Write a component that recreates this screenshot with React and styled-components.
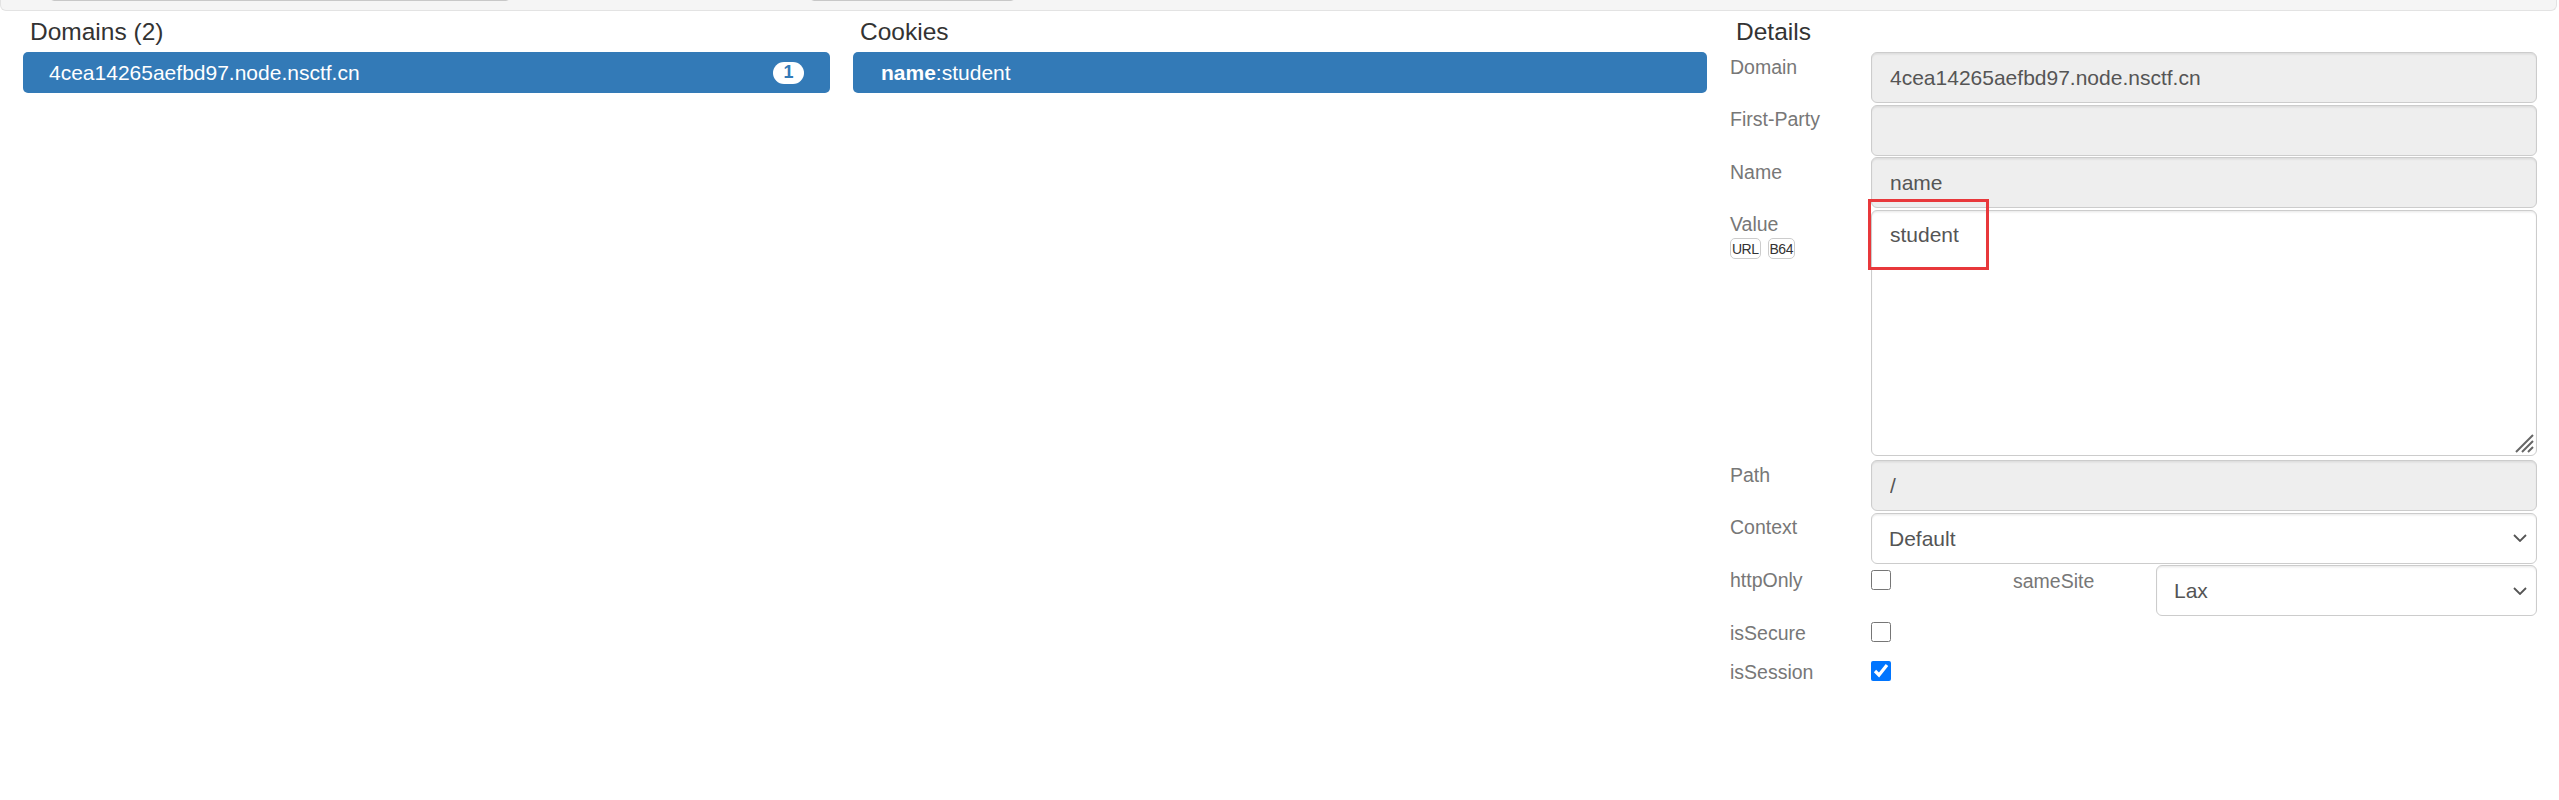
import React from 'react';
import styled, { createGlobalStyle } from 'styled-components';

const GlobalStyle = createGlobalStyle`
  html, body {
    margin: 0;
    padding: 0;
    background: #fff;
    font-family: "Liberation Sans", Arial, sans-serif;
  }
  * { box-sizing: border-box; }
`;

const Toolbar = styled.div`
  display: flex;
  height: 11px;
  margin-right: 2px;
  background: #f5f5f5;
  border: 1px solid #e3e3e3;
  border-top: none;
  border-radius: 0 0 6px 6px;
  overflow: hidden;
`;

const ToolbarField = styled.input`
  flex: none;
  width: ${p => p.$width}px;
  height: 30px;
  margin: -29px 0 0 ${p => p.$offset}px;
  border: 1px solid #c8c8c8;
  border-radius: 4px;
  background: #fff;
`;

const Columns = styled.div`
  display: grid;
  grid-template-columns: 807px 854px 807px;
  column-gap: 23px;
  padding: 0 22px 0 23px;
`;

const Panel = styled.section`
  display: flex;
  flex-direction: column;
`;

const Heading = styled.h4`
  margin: 0;
  height: 41px;
  padding: 7px ${p => p.$inset || 7}px 0;
  font-size: 24.5px;
  line-height: 27px;
  font-weight: 400;
  color: #333;
`;

const ListItem = styled.div`
  display: flex;
  align-items: center;
  justify-content: space-between;
  height: 41px;
  padding: 0 26px 0 ${p => p.$inset || 26}px;
  border-radius: 5px;
  background: #337ab7;
  color: #fff;
  font-size: 21px;
  b { font-weight: 700; }
`;

const Badge = styled.span`
  display: inline-flex;
  align-items: center;
  justify-content: center;
  min-width: 31px;
  height: 22px;
  border-radius: 11px;
  background: #fff;
  color: #337ab7;
  font-size: 18px;
  font-weight: 700;
`;

const Form = styled.div`
  display: flex;
  flex-direction: column;
  gap: 1.5px;
`;

const FieldRow = styled.div`
  display: grid;
  grid-template-columns: ${p => p.$cols || '141px 1fr'};
  align-items: start;
  height: ${p => (p.$height ? `${p.$height}px` : 'auto')};
`;

const Label = styled.label`
  display: block;
  font-size: 19.5px;
  line-height: 28px;
  padding-top: ${p => p.$top || 0.5}px;
  color: #777;
`;

const TextInput = styled.input`
  display: block;
  width: 100%;
  height: 51px;
  padding: 0 18px;
  font-family: inherit;
  font-size: 21px;
  color: #555;
  background: #eee;
  border: 1px solid #ccc;
  border-radius: 6px;
  box-shadow: inset 0 1.5px 1.5px rgba(0, 0, 0, 0.075);
  outline: none;
`;

const ValueBox = styled.div`
  position: relative;
  margin-bottom: 3px;
`;

const TextArea = styled.textarea`
  display: block;
  width: 100%;
  height: 246px;
  padding: 9px 18px;
  font-family: inherit;
  font-size: 21px;
  line-height: 30px;
  color: #555;
  background: #fff;
  border: 1px solid #ccc;
  border-radius: 6px;
  box-shadow: inset 0 1.5px 1.5px rgba(0, 0, 0, 0.075);
  resize: none;
  outline: none;
`;

const Grip = styled.svg`
  position: absolute;
  right: 3px;
  bottom: 3px;
  pointer-events: none;
`;

const Highlight = styled.div`
  position: absolute;
  left: -3px;
  top: -11px;
  width: 121px;
  height: 71px;
  border: 3px solid #e8383b;
  pointer-events: none;
`;

const SelectWrap = styled.div`
  position: relative;
`;

const Select = styled.select`
  display: block;
  width: 100%;
  height: 51px;
  padding: 0 40px 0 17px;
  font-family: inherit;
  font-size: 21px;
  color: #555;
  background: #fff;
  border: 1px solid #ccc;
  border-radius: 6px;
  box-shadow: inset 0 1.5px 1.5px rgba(0, 0, 0, 0.075);
  appearance: none;
  outline: none;
`;

const Chevron = styled.svg`
  position: absolute;
  right: 10px;
  top: 50%;
  margin-top: -4px;
  pointer-events: none;
`;

const Check = styled.input`
  width: 20px;
  height: 20px;
  margin: ${p => p.$top || 4.5}px 0 0 0;
`;

const CodecRow = styled.div`
  display: flex;
  gap: 7px;
`;

const Codec = styled.span`
  display: inline-flex;
  align-items: center;
  height: 21px;
  padding: 0 1px;
  font-size: 14px;
  letter-spacing: -0.5px;
  color: #333;
  background: #fff;
  border: 1px solid #ccc;
  border-radius: 5px;
`;

const Dropdown = ({ value, options }) => (
  <SelectWrap>
    <Select defaultValue={value}>
      {options.map(o => <option key={o}>{o}</option>)}
    </Select>
    <Chevron width="14" height="8" viewBox="0 0 14 8">
      <path d="M1 1l6 6 6-6" fill="none" stroke="#555" strokeWidth="1.8" />
    </Chevron>
  </SelectWrap>
);

export default function App() {
  return (
    <>
      <GlobalStyle />
      <Toolbar>
        <ToolbarField $offset={49} $width={460} readOnly />
        <ToolbarField $offset={300} $width={205} readOnly />
      </Toolbar>
      <Columns>
        <Panel>
          <Heading>Domains (2)</Heading>
          <ListItem>
            <span>4cea14265aefbd97.node.nsctf.cn</span>
            <Badge>1</Badge>
          </ListItem>
        </Panel>

        <Panel>
          <Heading>Cookies</Heading>
          <ListItem $inset={28}>
            <span><b>name</b>:student</span>
          </ListItem>
        </Panel>

        <Panel>
          <Heading $inset={6}>Details</Heading>
          <Form>
            <FieldRow>
              <Label>Domain</Label>
              <TextInput readOnly value="4cea14265aefbd97.node.nsctf.cn" />
            </FieldRow>
            <FieldRow>
              <Label>First-Party</Label>
              <TextInput readOnly value="" />
            </FieldRow>
            <FieldRow>
              <Label>Name</Label>
              <TextInput readOnly value="name" />
            </FieldRow>
            <FieldRow>
              <div>
                <Label>Value</Label>
                <CodecRow>
                  <Codec>URL</Codec>
                  <Codec>B64</Codec>
                </CodecRow>
              </div>
              <ValueBox>
                <TextArea defaultValue="student" />
                <Grip width="20" height="20" viewBox="0 0 20 20">
                  <path d="M19 2L2 19M19 8L8 19M19 14L14 19" stroke="#666" strokeWidth="2" />
                </Grip>
                <Highlight />
              </ValueBox>
            </FieldRow>
            <FieldRow>
              <Label>Path</Label>
              <TextInput readOnly value="/" />
            </FieldRow>
            <FieldRow>
              <Label>Context</Label>
              <Dropdown value="Default" options={['Default']} />
            </FieldRow>
            <FieldRow $cols="141px 142px 143px 1fr">
              <Label>httpOnly</Label>
              <Check type="checkbox" $top={5} />
              <Label $top={2}>sameSite</Label>
              <Dropdown value="Lax" options={['Lax', 'Strict', 'None']} />
            </FieldRow>
            <FieldRow $height={37.5}>
              <Label $top={1.5}>isSecure</Label>
              <Check type="checkbox" />
            </FieldRow>
            <FieldRow $height={37.5}>
              <Label $top={1.5}>isSession</Label>
              <Check type="checkbox" defaultChecked />
            </FieldRow>
          </Form>
        </Panel>
      </Columns>
    </>
  );
}
